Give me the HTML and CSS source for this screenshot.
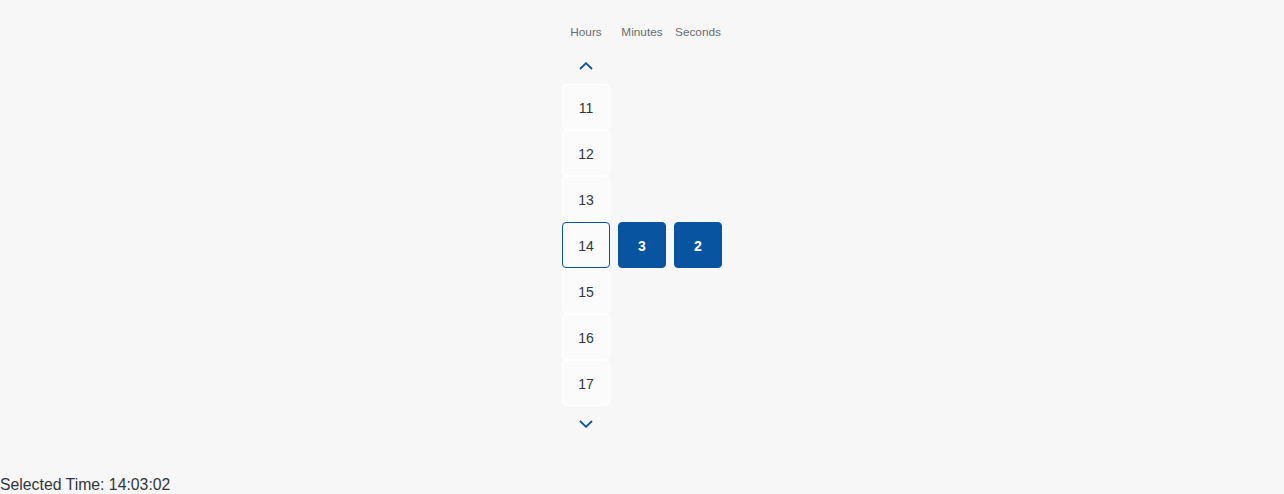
FILE: index.html
```html
<!DOCTYPE html>
<html lang="en">
<head>
<meta charset="utf-8">
<title>Time Picker</title>
<link rel="stylesheet" href="styles.css">
</head>
<body>
<div class="page">
  <div class="picker">
    <div class="label col-h">Hours</div>
    <div class="label col-m">Minutes</div>
    <div class="label col-s">Seconds</div>

    <button class="arrow arrow-up col-h" aria-label="Previous hour">
      <svg width="14" height="8" viewBox="0 0 14 8"><polyline points="1,7 7,1.2 13,7" fill="none" stroke="#0854a0" stroke-width="1.8"/></svg>
    </button>

    <div class="cell col-h r1">11</div>
    <div class="cell col-h r2">12</div>
    <div class="cell col-h r3">13</div>
    <div class="cell col-h r4 current">14</div>
    <div class="cell col-m r4 selected">3</div>
    <div class="cell col-s r4 selected">2</div>
    <div class="cell col-h r5">15</div>
    <div class="cell col-h r6">16</div>
    <div class="cell col-h r7">17</div>

    <button class="arrow arrow-down col-h" aria-label="Next hour">
      <svg width="14" height="8" viewBox="0 0 14 8"><polyline points="1,1 7,6.8 13,1" fill="none" stroke="#0854a0" stroke-width="1.8"/></svg>
    </button>
  </div>
  <div class="result">Selected Time: 14:03:02</div>
</div>
</body>
</html>
```

FILE: styles.css
```css
html, body {
  margin: 0;
  padding: 0;
  background: #f7f7f7;
}
body {
  font-family: "Liberation Sans", Arial, sans-serif;
  color: #32363a;
}
.page {
  padding-top: 24px;
}
.picker {
  display: grid;
  justify-content: center;
  grid-template-columns: repeat(3, 48px);
  grid-template-rows: 16px 44px repeat(7, 46px) 34px;
  column-gap: 8px;
}
.col-h { grid-column: 1; }
.col-m { grid-column: 2; }
.col-s { grid-column: 3; }
.r1 { grid-row: 3; }
.r2 { grid-row: 4; }
.r3 { grid-row: 5; }
.r4 { grid-row: 6; }
.r5 { grid-row: 7; }
.r6 { grid-row: 8; }
.r7 { grid-row: 9; }

.label {
  grid-row: 1;
  font-size: 11.8px;
  line-height: 16px;
  color: #6a6d70;
  text-align: center;
  white-space: nowrap;
  justify-self: center;
}
.arrow {
  background: none;
  border: 0;
  padding: 0;
  margin: 0;
  display: flex;
  align-items: center;
  justify-content: center;
  width: 48px;
  height: 36px;
  cursor: pointer;
}
.arrow-up {
  grid-row: 2;
  align-self: end;
  padding-bottom: 1px;
}
.arrow-down {
  grid-row: 10;
  align-self: start;
}
.cell {
  box-sizing: border-box;
  width: 48px;
  height: 46px;
  border: 1px solid #ffffff;
  border-radius: 4px;
  background: #fbfbfb;
  display: flex;
  align-items: center;
  justify-content: center;
  padding-top: 1px;
  font-size: 14px;
  color: #32363a;
}
.cell.current {
  border-color: #0854a0;
  background: #fbfbfb;
}
.cell.selected {
  background: #0854a0;
  border-color: #0854a0;
  color: #ffffff;
  font-weight: bold;
}
.result {
  margin-top: 36px;
  font-size: 15.8px;
  line-height: 18px;
  color: #32363a;
}
```
